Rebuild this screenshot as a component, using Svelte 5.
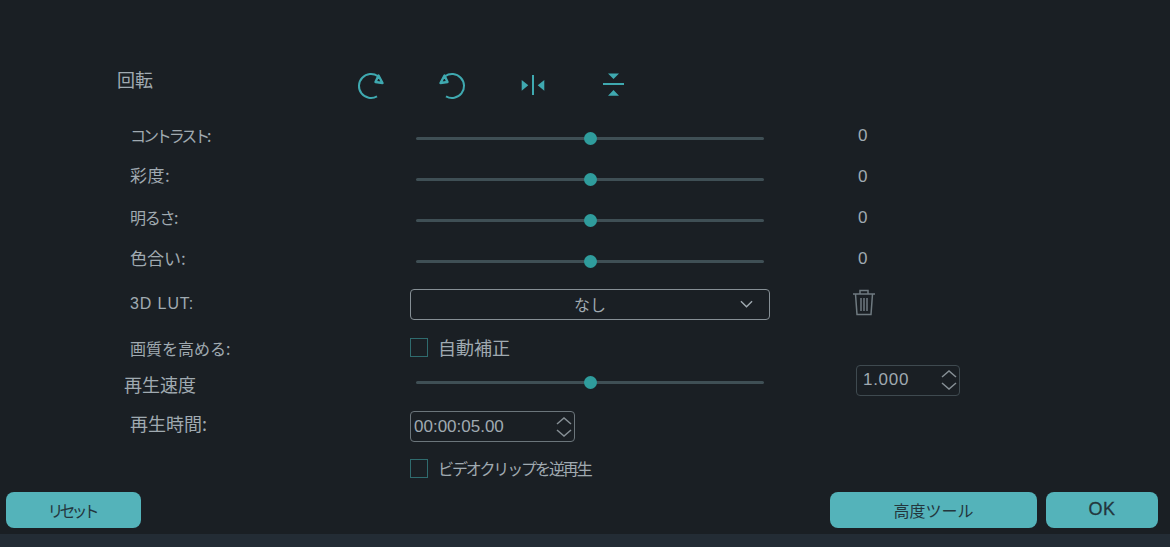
<script>
  const sliders = [
    { label: 'コントラスト:', cls: 'contrast', value: '0' },
    { label: '彩度:', cls: 'sat', value: '0' },
    { label: '明るさ:', cls: 'bright', value: '0' },
    { label: '色合い:', cls: 'hue', value: '0' }
  ];
</script>

<div class="panel">
  <div class="row rotate">
    <span class="label top">回転</span>
    <div class="icons">
      <svg viewBox="0 0 28 28" width="28" height="28"><path d="M21 4.300A12 12 0 1 0 20 24.400" /><path class="head" d="M21.500 3.500l4 7.500-7-1z" /></svg>
      <svg viewBox="0 0 28 28" width="28" height="28"><path d="M7 4.300A12 12 0 1 1 8 24.400" /><path class="head" d="M6.500 3.500l-4 7.500 7-1z" /></svg>
      <svg viewBox="0 0 28 28" width="28" height="28"><path d="M14 3v20" /><path class="fill" d="M2.700 8l6.600 5.300-6.600 5.400zM25.300 8l-6.600 5.300 6.600 5.400z" /></svg>
      <svg viewBox="0 0 28 28" width="28" height="28"><path d="M3 12h21" /><path class="fill" d="M8 1.500h11L13.500 7zM8 23.700h11L13.500 18z" /></svg>
    </div>
  </div>

  {#each sliders as s}
    <div class="row slider-row">
      <span class="label {s.cls}">{s.label}</span>
      <div class="slider"><span class="knob"></span></div>
      <span class="value">{s.value}</span>
    </div>
  {/each}

  <div class="row lut">
    <span class="label latin">3D LUT:</span>
    <div class="select"><span>なし</span>
      <svg class="chev" viewBox="0 0 14 8" width="13" height="8"><path d="M1 1l6 6 6-6" /></svg>
    </div>
    <svg class="trash" viewBox="0 0 24 28" width="24" height="28"><path d="M1 6h22M8 6V2.500h8V6M3.500 6l1.500 20.500h14L20.500 6M9 10v13M12 10v13M15 10v13" /></svg>
  </div>

  <div class="row check-row">
    <span class="label">画質を高める:</span>
    <label class="check"><span class="box"></span><span class="big">自動補正</span></label>
  </div>

  <div class="row speed">
    <span class="label left">再生速度</span>
    <div class="slider"><span class="knob"></span></div>
    <div class="spin small"><span>1.000</span>
      <svg viewBox="0 0 18 26" width="18" height="26"><path d="M2 10l7-6 7 6M2 16l7 6 7-6" /></svg>
    </div>
  </div>

  <div class="row duration">
    <span class="label time">再生時間:</span>
    <div class="spin"><span>00:00:05.00</span>
      <svg viewBox="0 0 18 26" width="18" height="26"><path d="M2 10l7-6 7 6M2 16l7 6 7-6" /></svg>
    </div>
  </div>

  <div class="row reverse">
    <label class="check"><span class="box"></span><span class="tight">ビデオクリップを逆再生</span></label>
  </div>

  <div class="footer">
    <button class="reset">リセット</button>
    <div class="right">
      <button class="wide">高度ツール</button>
      <button class="ok">OK</button>
    </div>
  </div>
</div>
<div class="strip"></div>

<style>
  :global(body) {
    margin: 0;
    background: #1a1f24;
  }

  .panel {
    height: 534px;
    box-sizing: border-box;
    padding-top: 66px;
    font: 16px "Noto Sans CJK JP", "Liberation Sans", sans-serif;
    color: #a0aab1;
    background: #1a1f24;
    display: flex;
    flex-direction: column;
  }

  .strip {
    height: 13px;
    background: #232c35;
  }

  .row {
    display: flex;
    align-items: center;
  }

  .label {
    width: 280px;
    margin-left: 130px;
    flex: none;
  }

  .rotate {
    height: 40px;
    margin-bottom: 12px;
  }

  .label.top {
    margin-left: 117px;
    width: 240px;
    margin-bottom: 15px;
    font-size: 18px;
  }

  .icons {
    display: flex;
    gap: 53px;
  }

  svg path {
    fill: none;
    stroke: #3fa9b0;
    stroke-width: 2;
  }

  svg path.fill {
    fill: #3fa9b0;
    stroke: none;
  }

  svg path.head {
    stroke-width: 2.400;
    stroke-linejoin: round;
  }

  .slider-row {
    height: 41px;
  }

  .slider-row .label {
    margin-bottom: 8px;
  }

  .contrast {
    letter-spacing: -3.100px;
  }

  .slider-row .sat {
    font-size: 17px;
    letter-spacing: 0.500px;
    margin-bottom: 10px;
  }

  .bright {
    letter-spacing: -1.300px;
  }

  .hue {
    font-size: 17px;
  }

  .latin {
    font-family: "Liberation Sans", sans-serif;
    font-size: 16px;
    letter-spacing: 0.900px;
  }

  .slider {
    width: 348px;
    height: 3px;
    margin-left: 6px;
    background: #3f4f55;
    border-radius: 2px;
    position: relative;
    flex: none;
  }

  .knob {
    position: absolute;
    left: 168px;
    top: -5px;
    width: 13px;
    height: 13px;
    border-radius: 50%;
    background: #2f9c9c;
  }

  .value {
    margin-left: 94px;
    margin-bottom: 6px;
    font: 17px "Liberation Sans", sans-serif;
  }

  .lut {
    height: 44px;
  }

  .select {
    width: 360px;
    height: 31px;
    box-sizing: border-box;
    border: 1px solid #868f95;
    border-radius: 4px;
    display: flex;
    align-items: center;
    justify-content: center;
    position: relative;
  }

  .chev {
    position: absolute;
    right: 16px;
    top: 10px;
  }

  .chev path {
    stroke: #a0aab1;
    stroke-width: 1.500;
  }

  .trash {
    margin-left: 82px;
    margin-bottom: 4px;
  }

  .trash path {
    stroke: #6f7a80;
    stroke-width: 1.500;
  }

  .check-row {
    height: 43px;
  }

  .check {
    display: flex;
    align-items: center;
    gap: 10px;
  }

  .big {
    font-size: 18px;
    margin-bottom: 2px;
  }

  .tight {
    letter-spacing: -2.100px;
    margin-bottom: 1px;
  }

  .box {
    width: 18px;
    height: 19px;
    box-sizing: border-box;
    border: 1px solid #2f6b6e;
    display: block;
  }

  .speed {
    height: 26px;
  }

  .label.left {
    margin-left: 124px;
    width: 286px;
    margin-top: 4px;
    font-size: 18px;
  }

  .spin {
    width: 165px;
    height: 31px;
    box-sizing: border-box;
    border: 1px solid #6b757b;
    border-radius: 4px;
    padding: 0 1px 0 3px;
    display: flex;
    align-items: center;
    justify-content: space-between;
    font: 17px "Liberation Sans", sans-serif;
  }

  .spin svg path {
    stroke: #868f95;
    stroke-width: 1.500;
  }

  .small {
    width: 104px;
    margin-left: 92px;
    margin-top: -4px;
    padding-left: 6px;
    border-color: #3f4a50;
    letter-spacing: 0.700px;
  }

  .duration {
    height: 63px;
  }

  .label.time {
    font-size: 18px;
    margin-bottom: 8px;
  }

  .reverse {
    height: 21px;
    padding-left: 410px;
  }

  .footer {
    display: flex;
    justify-content: space-between;
    padding: 13px 12px 0 6px;
  }

  .right {
    display: flex;
    gap: 9px;
  }

  button {
    width: 135px;
    height: 36px;
    border: none;
    border-radius: 8px;
    background: #54b3ba;
    color: #23363d;
    font: inherit;
    padding: 0 0 1px;
  }

  .reset {
    letter-spacing: -4px;
    padding-right: 4px;
  }

  .wide {
    width: 207px;
  }

  .ok {
    width: 112px;
    font: 18px "Liberation Sans", sans-serif;
    letter-spacing: 0.500px;
    -webkit-text-stroke: 0.300px #23363d;
  }
</style>
